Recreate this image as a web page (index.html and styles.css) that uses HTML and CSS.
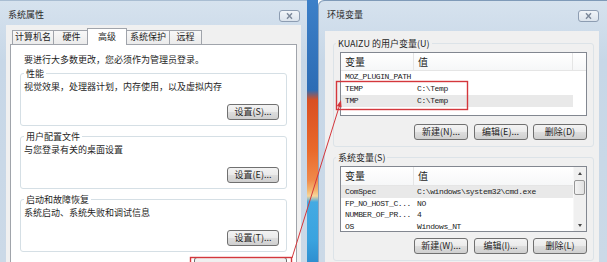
FILE: index.html
```html
<!DOCTYPE html>
<html>
<head>
    <meta charset="UTF-8">
    <title>系统属性 - 环境变量</title>
    <link rel="stylesheet" href="styles.css">
</head>
<body>
    <div class="desktop">
        <!-- 系统属性 dialog -->
        <div class="window sysprops">
            <div class="titlebar">
                <span class="title">系统属性</span>
                <span class="close-btn">
                    <svg width="21" height="12" viewBox="0 0 21 12">
                        <path d="M8 3.2 L13 8.8 M13 3.2 L8 8.8" stroke="#7b889a" stroke-width="1.4" fill="none"/>
                    </svg>
                </span>
            </div>
            <div class="client">
                <div class="tabs">
                    <div class="tab t1">计算机名</div>
                    <div class="tab t2">硬件</div>
                    <div class="tab t3 active">高级</div>
                    <div class="tab t4">系统保护</div>
                    <div class="tab t5">远程</div>
                </div>
                <div class="tab-panel">
                    <p class="notice">要进行大多数更改，您必须作为管理员登录。</p>
                    <fieldset class="group">
                        <legend>性能</legend>
                        <p>视觉效果，处理器计划，内存使用，以及虚拟内存</p>
                        <div class="btn-row"><button class="btn">设置(S)...</button></div>
                    </fieldset>
                    <fieldset class="group">
                        <legend>用户配置文件</legend>
                        <p>与您登录有关的桌面设置</p>
                        <div class="btn-row"><button class="btn">设置(E)...</button></div>
                    </fieldset>
                    <fieldset class="group">
                        <legend>启动和故障恢复</legend>
                        <p>系统启动、系统失败和调试信息</p>
                        <div class="btn-row"><button class="btn">设置(T)...</button></div>
                    </fieldset>
                    <!-- only the top edge of this button is inside the shot -->
                    <div class="btn-row env-row"><button class="btn env-btn" aria-label="环境变量(N)..."></button></div>
                </div>
            </div>
        </div>

        <div class="gap-strip"></div>

        <!-- 环境变量 dialog -->
        <div class="window envvars">
            <div class="titlebar tall">
                <span class="title">环境变量</span>
                <span class="close-btn">
                    <svg width="21" height="12" viewBox="0 0 21 12">
                        <path d="M8 3.2 L13 8.8 M13 3.2 L8 8.8" stroke="#7b889a" stroke-width="1.4" fill="none"/>
                    </svg>
                </span>
            </div>
            <div class="client env-client">
                <fieldset class="env-group">
                    <legend>KUAIZU 的用户变量(U)</legend>
                    <div class="listview user-list">
                        <div class="lv-body">
                            <div class="lv-header">
                                <div class="col-name">变量</div>
                                <div class="col-value">值</div>
                                <div class="col-fill"></div>
                            </div>
                            <div class="lv-row"><span class="col-name">MOZ_PLUGIN_PATH</span><span class="col-value"></span></div>
                            <div class="lv-row"><span class="col-name">TEMP</span><span class="col-value">C:\Temp</span></div>
                            <div class="lv-row selected"><span class="col-name">TMP</span><span class="col-value">C:\Temp</span></div>
                        </div>
                    </div>
                    <div class="btn-row">
                        <button class="btn wide">新建(N)...</button>
                        <button class="btn wide">编辑(E)...</button>
                        <button class="btn wide">删除(D)</button>
                    </div>
                </fieldset>
                <fieldset class="env-group">
                    <legend>系统变量(S)</legend>
                    <div class="listview sys-list">
                        <div class="lv-body">
                            <div class="lv-header">
                                <div class="col-name">变量</div>
                                <div class="col-value">值</div>
                            </div>
                            <div class="lv-row selected"><span class="col-name">ComSpec</span><span class="col-value">C:\windows\system32\cmd.exe</span></div>
                            <div class="lv-row"><span class="col-name">FP_NO_HOST_C...</span><span class="col-value">NO</span></div>
                            <div class="lv-row"><span class="col-name">NUMBER_OF_PR...</span><span class="col-value">4</span></div>
                            <div class="lv-row"><span class="col-name">OS</span><span class="col-value">Windows_NT</span></div>
                        </div>
                        <div class="scrollbar">
                            <div class="sb-arrow"><span class="arrow-up"></span></div>
                            <div class="sb-thumb"></div>
                            <div class="sb-track"></div>
                            <div class="sb-arrow"><span class="arrow-down"></span></div>
                        </div>
                    </div>
                    <div class="btn-row">
                        <button class="btn wide">新建(W)...</button>
                        <button class="btn wide">编辑(I)...</button>
                        <button class="btn wide">删除(L)</button>
                    </div>
                </fieldset>
            </div>
        </div>

        <!-- red annotation marks drawn over both dialogs -->
        <svg class="annotations" width="607" height="262" viewBox="0 0 607 262">
            <rect x="336.5" y="81.5" width="131" height="28" fill="none" stroke="#d4373c" stroke-width="1.4"/>
            <rect x="190.5" y="257.5" width="101" height="12" fill="none" stroke="#d4373c" stroke-width="1.4"/>
            <line x1="292" y1="258" x2="340" y2="104" stroke="#d4373c" stroke-width="1"/>
            <polygon points="341,100 341.6,107.5 336.8,106" fill="#d4373c"/>
        </svg>
    </div>
</body>
</html>
```

FILE: styles.css
```css
body {
    margin: 0;
    padding: 0;
    overflow: hidden;
    font-family: "Noto Sans CJK SC", "Noto Sans", sans-serif;
    font-size: 9px;
    color: #1e1e1e;
}
.desktop {
    position: relative;
    display: flex;
    width: 607px;
    height: 262px;
    overflow: hidden;
}
.window {
    display: flex;
    flex-direction: column;
    box-sizing: border-box;
    height: 262px;
    background: linear-gradient(to bottom, #d6e2ee, #c7d7e7 60px, #cbd9e7);
}
.sysprops {
    width: 307px;
    flex: none;
    padding: 0 6px;
    border-top: 1px solid #a9bdd2;
}
.envvars {
    flex: 1;
    padding: 0 10px 0 7px;
    border-top: 1px solid #7f9ab8;
    border-top-left-radius: 6px;
    box-shadow: inset 1px 0 0 #8ea5bf;
}
.gap-strip {
    width: 11px;
    flex: none;
    background: linear-gradient(to bottom, #3d80c8 0, #2c6cb5 90px, #d94f22 100px, #e9692b 150px, #f0894a 180px, #f3b56e 190px, #f6d59a 196px, #44aae3 202px, #3aa3df 240px, #2f8fd0 262px);
}
.titlebar {
    display: flex;
    justify-content: space-between;
    align-items: flex-start;
    box-sizing: border-box;
    height: 24px;
    padding: 8px 1px 0 2px;
    flex: none;
}
.titlebar.tall {
    height: 30px;
    padding: 8px 0 0 2px;
}
.title {
    line-height: 12px;
    color: #2a2a2a;
}
.close-btn {
    display: block;
    width: 21px;
    height: 12px;
    margin-top: 1px;
    box-sizing: border-box;
    border: 1px solid #8d9db2;
    border-radius: 3px;
    background: linear-gradient(to bottom, #f1f5f9, #dbe3ec);
}
.close-btn svg {
    display: block;
    margin: -1px;
}
.client {
    flex: 1;
    background: #f0f0f0;
    padding: 3px 4px 0 4px;
}

/* tabs */
.tabs {
    display: flex;
    align-items: flex-end;
    padding-left: 2px;
}
.tab {
    box-sizing: border-box;
    height: 14px;
    line-height: 12px;
    text-align: center;
    border: 1px solid #a0a4ab;
    border-bottom: none;
    background: linear-gradient(to bottom, #f8f8f8, #ebebeb);
    margin-right: -1px;
}
.t1 { width: 42px; }
.t2 { width: 37px; }
.t3 { width: 40px; }
.t4 { width: 44px; }
.t5 { width: 33px; }
.tab.active {
    position: relative;
    height: 17px;
    line-height: 15px;
    margin-left: -2px;
    margin-bottom: -1px;
    background: #fff;
}
.tab-panel {
    background: #fff;
    border: 1px solid #a0a4ab;
    padding: 9px 9px 0 9px;
    height: 230px;
}
.notice {
    margin: 0 0 1.5px 4px;
    line-height: 12px;
}

/* group boxes */
.group {
    margin: 0 0 4.5px 0;
    padding: 0 7px 5px 3px;
    border: 1px solid #d5dfe5;
    border-radius: 3px;
    min-inline-size: 0;
}
.group legend,
.env-group legend {
    padding: 0 2px;
    line-height: 11px;
}
.group p {
    margin: 2.5px 0 0 0;
    line-height: 12px;
}
.btn-row {
    display: flex;
    justify-content: flex-end;
    gap: 5.5px;
}
.group .btn-row {
    margin-top: 11px;
}
.env-row {
    margin-top: 1.5px;
}
.btn {
    box-sizing: border-box;
    width: 52px;
    height: 16px;
    padding: 0;
    font-family: "Noto Sans CJK SC", "Noto Sans", sans-serif;
    font-size: 9px;
    line-height: 14px;
    color: #1e1e1e;
    border: 1px solid #707070;
    border-radius: 3px;
    background: linear-gradient(to bottom, #f3f3f3 0%, #ebebeb 48%, #dddddd 52%, #cfcfcf 100%);
}
.btn.env-btn {
    width: 93px;
}
.btn.wide {
    width: 54px;
}

/* environment variable dialog */
.env-client {
    padding: 6.5px 5px 0 8px;
}
.env-group {
    margin: 0 0 4.5px 0;
    padding: 3.5px 6px 6px 6px;
    border: 1px solid #dce3e8;
    border-radius: 3px;
    min-inline-size: 0;
}
.env-group legend {
    margin-left: -4px;
}
.env-group .btn-row {
    margin-top: 8px;
}
.env-group + .env-group .btn-row {
    margin-top: 6px;
}
.listview {
    display: flex;
    box-sizing: border-box;
    border: 1px solid #828790;
    background: #fff;
    overflow: hidden;
}
.user-list {
    height: 64px;
}
.sys-list {
    height: 66px;
}
.lv-body {
    flex: 1;
}
.lv-header {
    display: flex;
    box-sizing: border-box;
    height: 18px;
    border-bottom: 1px solid #e5e5e5;
    background: linear-gradient(to bottom, #ffffff, #f6f7f8);
    font-size: 10px;
    line-height: 17px;
}
.sys-list .lv-header {
    height: 19px;
    line-height: 18px;
}
.lv-header .col-name {
    width: 73px;
    box-sizing: border-box;
    padding-left: 4px;
    border-right: 1px solid #e5e5e5;
}
.lv-header .col-value {
    width: 159px;
    box-sizing: border-box;
    padding-left: 4px;
    border-right: 1px solid #e5e5e5;
}
.sys-list .lv-header .col-value {
    flex: 1;
    border-right: none;
}
.col-fill {
    flex: 1;
}
.lv-row {
    display: flex;
    width: 232px;
    height: 12px;
    line-height: 12px;
    font-family: "Liberation Mono", monospace;
    font-size: 8px;
    letter-spacing: -0.4px;
    color: #222;
    white-space: nowrap;
}
.sys-list .lv-row {
    width: auto;
    height: 11.5px;
    line-height: 11.5px;
}
.lv-row .col-name {
    width: 73px;
    box-sizing: border-box;
    padding-left: 4px;
    overflow: hidden;
}
.lv-row .col-value {
    padding-left: 3px;
}
.lv-row.selected {
    background: #e9e9e9;
}

/* scrollbar */
.scrollbar {
    display: flex;
    flex-direction: column;
    width: 12px;
    background: #f0f0f0;
    border-left: 1px solid #f7f7f7;
}
.sb-arrow {
    display: flex;
    align-items: center;
    justify-content: center;
    height: 12px;
}
.arrow-up {
    border-left: 2.5px solid transparent;
    border-right: 2.5px solid transparent;
    border-bottom: 3px solid #4a4a4a;
}
.arrow-down {
    border-left: 2.5px solid transparent;
    border-right: 2.5px solid transparent;
    border-top: 3px solid #4a4a4a;
}
.sb-thumb {
    height: 13px;
    margin: 1px 1px 0 0;
    border: 1px solid #979797;
    border-radius: 2px;
    background: linear-gradient(to right, #f3f3f3, #e2e2e2);
}
.sb-track {
    flex: 1;
}

.annotations {
    position: absolute;
    top: 0;
    left: 0;
    pointer-events: none;
}
```
